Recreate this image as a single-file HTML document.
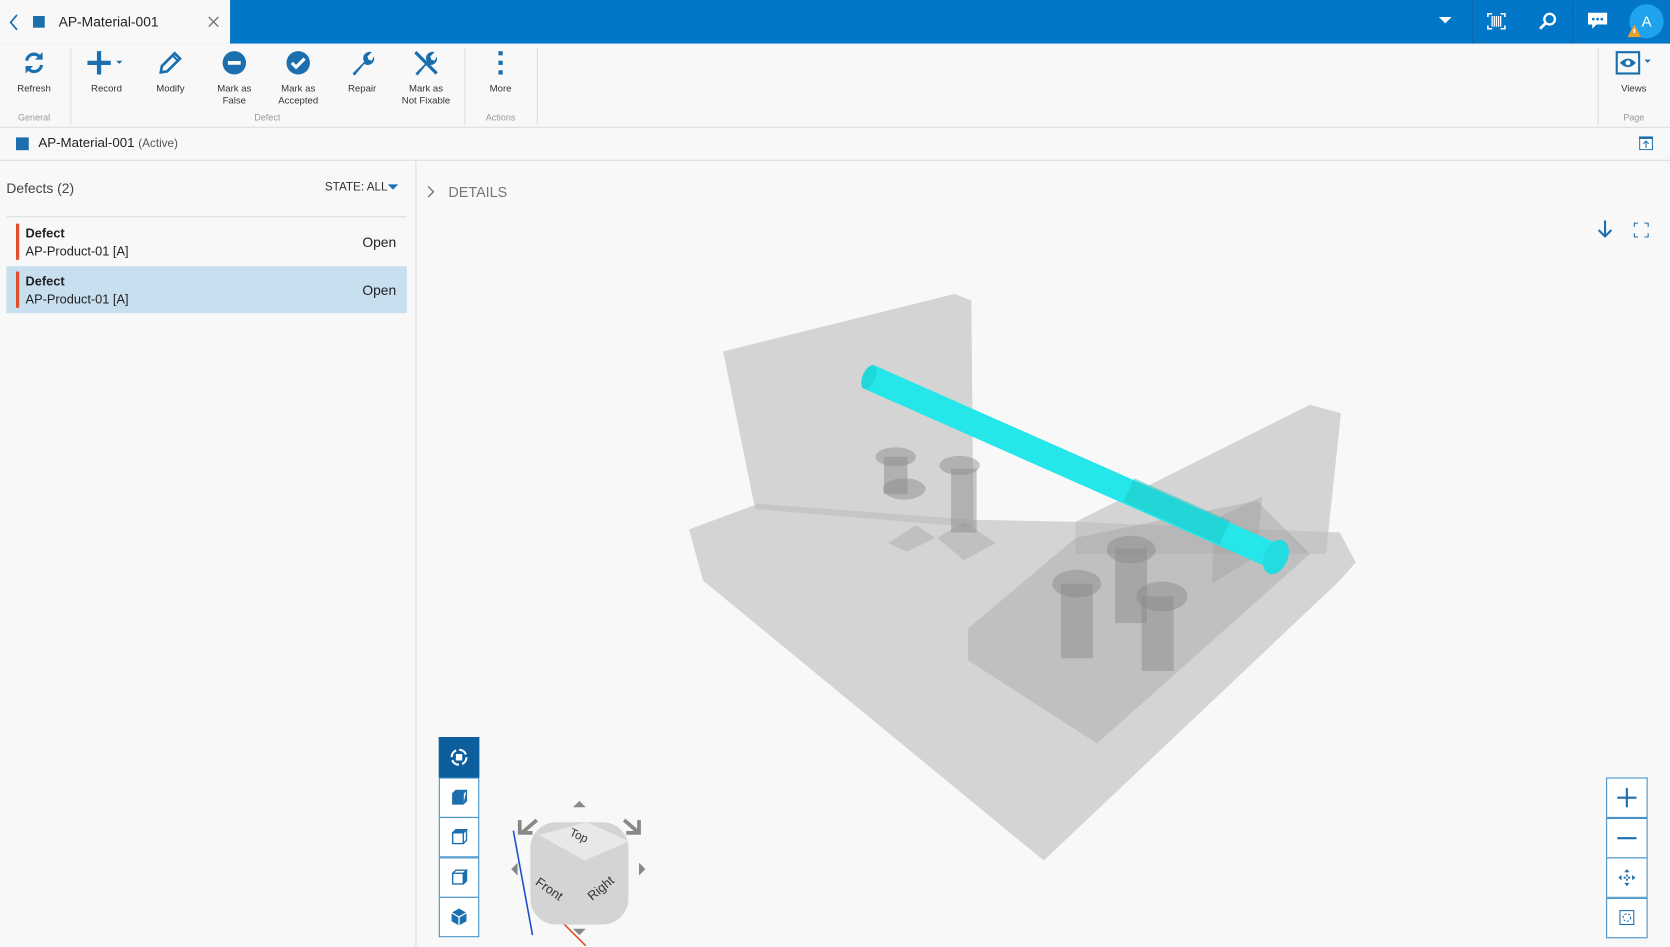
<!DOCTYPE html>
<html><head><meta charset="utf-8"><style>
*{box-sizing:border-box;margin:0;padding:0}
body{width:1670px;height:947px;overflow:hidden;background:#f8f8f8;font-family:"Liberation Sans",sans-serif}
#w{width:1568px;height:889px;transform:scale(1.06505);transform-origin:0 0;position:relative;background:#f8f8f8}
.abs{position:absolute}
.top{left:0;top:0;width:1568px;height:41px;background:#0277c8}
.tab{left:0;top:0;width:216px;height:41px;background:#f8f8f8;font-size:13px;color:#222}
.rib{left:0;top:41px;width:1568px;height:79px;background:#f8f8f8;border-bottom:1px solid #ddd}
.btn{position:absolute;top:6px;width:60px;text-align:center;font-size:9px;color:#333;line-height:11px}
.btn svg{display:block;margin:0 auto 7px}
.grp{position:absolute;top:64px;font-size:8.5px;color:#999;text-align:center}
.sep{position:absolute;top:4px;width:1px;height:72px;background:#ddd}
.row{position:absolute;left:6px;width:376px;height:44px;font-size:12px;color:#222}
.row b{font-weight:bold}
.bar{position:absolute;left:9px;top:5px;width:3px;height:34px;background:#e0502a}
.vt{position:absolute;left:412px;width:38px;height:38px;border:1px solid #3f8fc6;background:#fff}
.zb{position:absolute;left:1508px;width:39px;height:38px;border:1px solid #3f8fc6;background:#fff}
</style></head><body><div id="w">
<div class="abs top"></div>
<div class="abs tab">
<svg class="abs" style="left:8px;top:13px" width="10" height="16"><path d="M8 1L2 8l6 7" fill="none" stroke="#1b6fae" stroke-width="1.6"/></svg>
<div class="abs" style="left:31px;top:15px;width:11px;height:11px;background:#1b6fae"></div>
<div class="abs" style="left:55px;top:13px">AP-Material-001</div>
<svg class="abs" style="left:195px;top:15px" width="11" height="11"><path d="M1 1l9 9M10 1l-9 9" stroke="#777" stroke-width="1.3"/></svg>
</div>
<svg class="abs" style="left:1351px;top:16px" width="12" height="8"><path d="M0 0h12L6 6z" fill="#fff"/></svg>
<div class="abs" style="left:1382px;top:0;height:41px;border-left:1px dotted #0a5a95"></div>
<div class="abs" style="left:1476px;top:0;height:41px;border-left:1px dotted #0a5a95"></div>
<svg class="abs" style="left:1396px;top:12px" width="18" height="16"><path d="M1 4V1h4M13 1h4v3M1 12v3h4M13 15h4v-3" fill="none" stroke="#fff" stroke-width="1.5"/><path d="M5 3v10M7 3v10M9 3v10M11 3v10M13 3v10" stroke="#fff" stroke-width="1.2"/></svg>
<svg class="abs" style="left:1444px;top:11px" width="18" height="18"><circle cx="11" cy="7" r="5" fill="none" stroke="#fff" stroke-width="2.2"/><path d="M7 11l-5 5" stroke="#fff" stroke-width="2.6"/></svg>
<svg class="abs" style="left:1490px;top:11px" width="20" height="18"><path d="M1 1h18v11H9l-4 4v-4H1z" fill="#fff"/><circle cx="6" cy="7" r="1.3" fill="#0277c8"/><circle cx="10" cy="7" r="1.3" fill="#0277c8"/><circle cx="14" cy="7" r="1.3" fill="#0277c8"/></svg>
<div class="abs" style="left:1530px;top:4px;width:32px;height:32px;border-radius:50%;background:#1fa3ef;color:#fff;font-size:14px;text-align:center;line-height:32px">A</div>
<svg class="abs" style="left:1528px;top:23px" width="13" height="12"><path d="M6.5 0L13 12H0z" fill="#e6a030"/><path d="M6.5 4v4" stroke="#fff" stroke-width="1.4"/></svg>

<div class="abs rib">
<div class="btn" style="left:2px"><svg width="22" height="24" viewBox="0 0 22 24"><path d="M4 10a7 7 0 0 1 12-4l2 2M18 14a7 7 0 0 1-12 4l-2-2" fill="none" stroke="#1b6fae" stroke-width="3"/><path d="M19 2v7h-7zM3 22v-7h7z" fill="#1b6fae"/></svg>Refresh</div>
<div class="grp" style="left:2px;width:60px">General</div>
<div class="sep" style="left:66px"></div>
<div class="btn" style="left:70px"><svg width="36" height="24"><path d="M11 1v22M0 12h22" stroke="#1b6fae" stroke-width="4"/><path d="M27 10h6l-3 3z" fill="#1b6fae"/></svg>Record</div>
<div class="btn" style="left:130px"><svg width="24" height="24"><path d="M3 21l1-6L16 3l5 5L9 20z" fill="none" stroke="#1b6fae" stroke-width="2.5"/><path d="M14 5l5 5" stroke="#1b6fae" stroke-width="2"/></svg>Modify</div>
<div class="btn" style="left:190px"><svg width="24" height="24"><circle cx="12" cy="12" r="11" fill="#1b6fae"/><path d="M6 12h12" stroke="#fff" stroke-width="3.5"/></svg>Mark as<br>False</div>
<div class="btn" style="left:250px"><svg width="24" height="24"><circle cx="12" cy="12" r="11" fill="#1b6fae"/><path d="M6 12l4 4 8-8" fill="none" stroke="#fff" stroke-width="3"/></svg>Mark as<br>Accepted</div>
<div class="btn" style="left:310px"><svg width="24" height="24"><path d="M3 22L14 11a6 6 0 0 1 7-9l-4 4 1 3 3 1 2-4a6 6 0 0 1-9 7L5 24z" fill="#1b6fae"/></svg>Repair</div>
<div class="btn" style="left:370px"><svg width="26" height="24"><path d="M3 22L14 11a6 6 0 0 1 7-9l-4 4 1 3 3 1 2-4a6 6 0 0 1-9 7L5 24z" fill="#1b6fae"/><path d="M3 2l20 20" stroke="#1b6fae" stroke-width="3"/></svg>Mark as<br>Not Fixable</div>
<div class="grp" style="left:66px;width:370px">Defect</div>
<div class="sep" style="left:436px"></div>
<div class="btn" style="left:440px"><svg width="24" height="24"><rect x="10" y="1" width="4" height="4" fill="#1b6fae"/><rect x="10" y="10" width="4" height="4" fill="#1b6fae"/><rect x="10" y="19" width="4" height="4" fill="#1b6fae"/></svg>More</div>
<div class="grp" style="left:436px;width:68px">Actions</div>
<div class="sep" style="left:504px"></div>
<div class="sep" style="left:1500px"></div>
<div class="btn" style="left:1504px"><svg width="40" height="24"><rect x="4" y="2" width="21" height="20" fill="none" stroke="#1b6fae" stroke-width="2"/><path d="M7 12q7.5-8 15 0q-7.5 8-15 0z" fill="#1b6fae"/><circle cx="14.5" cy="12" r="2.3" fill="#fff"/><path d="M30 9h6l-3 3z" fill="#1b6fae"/></svg>Views</div>
<div class="grp" style="left:1504px;width:60px">Page</div>
</div>

<div class="abs" style="left:15px;top:129px;width:12px;height:12px;background:#1b6fae"></div>
<div class="abs" style="left:36px;top:127px;font-size:12.5px;color:#222">AP-Material-001 <span style="font-size:11px;color:#555">(Active)</span></div>
<svg class="abs" style="left:1539px;top:128px" width="13" height="13"><rect x="0.5" y="0.5" width="12" height="12" fill="#fff" stroke="#1b6fae"/><rect x="0" y="0" width="13" height="2.5" fill="#1b6fae"/><path d="M6.5 11V5M4 7l2.5-2.5L9 7" fill="none" stroke="#1b6fae"/></svg>
<div class="abs" style="left:0;top:150px;width:1568px;height:1px;background:#ddd"></div>
<div class="abs" style="left:390px;top:151px;width:1px;height:738px;background:#ddd"></div>

<div class="abs" style="left:6px;top:169px;font-size:13px;color:#444">Defects (2)</div>
<div class="abs" style="left:305px;top:170px;font-size:11px;color:#333">STATE: ALL</div>
<svg class="abs" style="left:364px;top:173px" width="10" height="6"><path d="M0 0h10L5 5z" fill="#1b6fae"/></svg>
<div class="abs" style="left:6px;top:203px;width:376px;height:1px;background:#ddd"></div>
<div class="row" style="top:205px"><div class="bar"></div><div class="abs" style="left:18px;top:6px;line-height:17px"><b>Defect</b><br>AP-Product-01 [A]</div><div class="abs" style="right:10px;top:15px;font-size:13px">Open</div></div>
<div class="row" style="top:250px;background:#c7dfef"><div class="bar"></div><div class="abs" style="left:18px;top:6px;line-height:17px"><b>Defect</b><br>AP-Product-01 [A]</div><div class="abs" style="right:10px;top:15px;font-size:13px">Open</div></div>

<svg class="abs" style="left:401px;top:174px" width="8" height="12"><path d="M1 1l5 5-5 5" fill="none" stroke="#777" stroke-width="1.3"/></svg>
<div class="abs" style="left:421px;top:173px;font-size:13.5px;color:#777">DETAILS</div>
<svg class="abs" style="left:1500px;top:207px" width="14" height="16"><path d="M7 0v15M1 9l6 6 6-6" fill="none" stroke="#1b6fae" stroke-width="2"/></svg>
<svg class="abs" style="left:1534px;top:209px" width="14" height="14"><path d="M0 4V0h4M10 0h4v4M0 10v4h4M10 14h4v-4" fill="none" stroke="#1b6fae" stroke-width="2"/></svg>

<svg class="abs" style="left:0;top:0" width="1568" height="889">
<g fill="#bdbdbd" fill-opacity="0.6">
<polygon points="679,330 896,276 912,282 914,495 709,478"/>
<polygon points="647,497 712,473 914,488 1010,490 1258,500 1273,528 1258,545 980,808 660,545"/>
<polygon points="1010,490 1230,380 1259,388 1245,520 1010,520"/>
</g>
<g fill="#9a9a9a" fill-opacity="0.35">
<polygon points="909,590 1010,505 1180,470 1230,520 1030,698 909,620"/>
<polygon points="1138,548 1140,488 1185,466 1180,522"/>
<polygon points="834,510 860,493 878,505 852,518"/>
<polygon points="880,505 905,490 935,510 905,526"/>
</g>
<g fill="#888" fill-opacity="0.45">
<rect x="996" y="548" width="30" height="70"/><ellipse cx="1011" cy="548" rx="23" ry="13"/>
<rect x="1047" y="515" width="30" height="70"/><ellipse cx="1062" cy="516" rx="23" ry="13"/>
<rect x="1072" y="560" width="30" height="70"/><ellipse cx="1091" cy="560" rx="24" ry="14"/>
<ellipse cx="841" cy="429" rx="19" ry="9"/><rect x="830" y="429" width="22" height="35"/><ellipse cx="849" cy="459" rx="20" ry="10"/>
<ellipse cx="901" cy="437" rx="19" ry="9"/><rect x="893" y="440" width="24" height="60"/>
</g>
<line x1="816" y1="354" x2="1196" y2="522" stroke="#25e6e8" stroke-width="24"/>
<ellipse cx="816" cy="354" rx="6" ry="12" transform="rotate(24 816 354)" fill="#1fd8da"/>
<ellipse cx="1198" cy="523" rx="11" ry="17" transform="rotate(24 1198 523)" fill="#22dcdf"/>
<line x1="1060" y1="460" x2="1150" y2="500" stroke="#1fc4c6" stroke-width="24" stroke-opacity="0.5"/>
</svg>

<div class="vt" style="top:692px;background:#0d5e9c;border-color:#0d5e9c"><svg width="36" height="36"><circle cx="18" cy="18" r="7" fill="none" stroke="#fff" stroke-width="2" stroke-dasharray="8 3"/><rect x="15" y="15" width="6" height="6" fill="#fff"/></svg></div>
<div class="vt" style="top:730px"><svg width="36" height="36"><path d="M12 14h10v10H12z M12 14l3-3h10l-3 3M22 24l3-3V11" fill="#1b6fae" stroke="#1b6fae"/></svg></div>
<div class="vt" style="top:767px"><svg width="36" height="36"><path d="M12 14h10v10H12z M12 14l3-3h10l-3 3M22 24l3-3V11" fill="none" stroke="#1b6fae" stroke-width="1.3"/><path d="M12 14l3-3h10l-3 3z" fill="#1b6fae"/></svg></div>
<div class="vt" style="top:805px"><svg width="36" height="36"><path d="M12 14h10v10H12z M12 14l3-3h10l-3 3M22 24l3-3V11" fill="none" stroke="#1b6fae" stroke-width="1.3"/><path d="M22 14l3-3v10l-3 3z" fill="#1b6fae"/></svg></div>
<div class="vt" style="top:842px"><svg width="36" height="36"><path d="M18 10l7 4v8l-7 4-7-4v-8z" fill="#1b6fae"/><path d="M11 14l7 4 7-4M18 18v8" stroke="#fff" stroke-width="1.2" fill="none"/></svg></div>

<svg class="abs" style="left:476px;top:750px" width="140" height="139">
<path d="M6 30L24 128" stroke="#2050d0" stroke-width="1.5"/><path d="M24 88l50 50" stroke="#e05020" stroke-width="1.5"/><path d="M24 88l12-6" stroke="#40a080" stroke-width="1"/>
<rect x="22" y="22" width="92" height="96" rx="24" fill="#d4d4d4"/>
<path d="M30 34l45-12 40 18-42 18z" fill="#e8e8e8"/>
<path d="M62 8l6-6 6 6z M62 122l6 6 6-6zM124 60l6 6-6 6zM10 60l-6 6 6 6z" fill="#888"/>
<path d="M14 32l14-12M12 20v12h12M110 20l14 12M124 20v12h-12" stroke="#888" stroke-width="3.5" fill="none"/>
<text x="58" y="34" font-size="11" fill="#333" transform="rotate(25 58 34)">Top</text>
<text x="26" y="80" font-size="12" fill="#333" transform="rotate(35 26 80)">Front</text>
<text x="80" y="96" font-size="12" fill="#333" transform="rotate(-40 80 96)">Right</text>
</svg>

<div class="zb" style="top:730px"><svg width="37" height="36"><path d="M18.5 9v18M9.5 18h18" stroke="#1b6fae" stroke-width="2"/></svg></div>
<div class="zb" style="top:768px"><svg width="37" height="36"><path d="M9.5 18h18" stroke="#1b6fae" stroke-width="2"/></svg></div>
<div class="zb" style="top:805px"><svg width="37" height="36"><path d="M18.5 11v14M11.5 18h14" stroke="#1b6fae" stroke-width="1.6" stroke-dasharray="2 2"/><path d="M18.5 10l-2.5 3h5zM18.5 26l-2.5-3h5zM10.5 18l3-2.5v5zM26.5 18l-3-2.5v5z" fill="#1b6fae"/></svg></div>
<div class="zb" style="top:843px"><svg width="37" height="36"><rect x="12" y="11" width="13" height="13" fill="none" stroke="#1b6fae"/><circle cx="18.5" cy="17.5" r="3.5" fill="none" stroke="#1b6fae" stroke-dasharray="2 1.5"/></svg></div>
</div></body></html>
